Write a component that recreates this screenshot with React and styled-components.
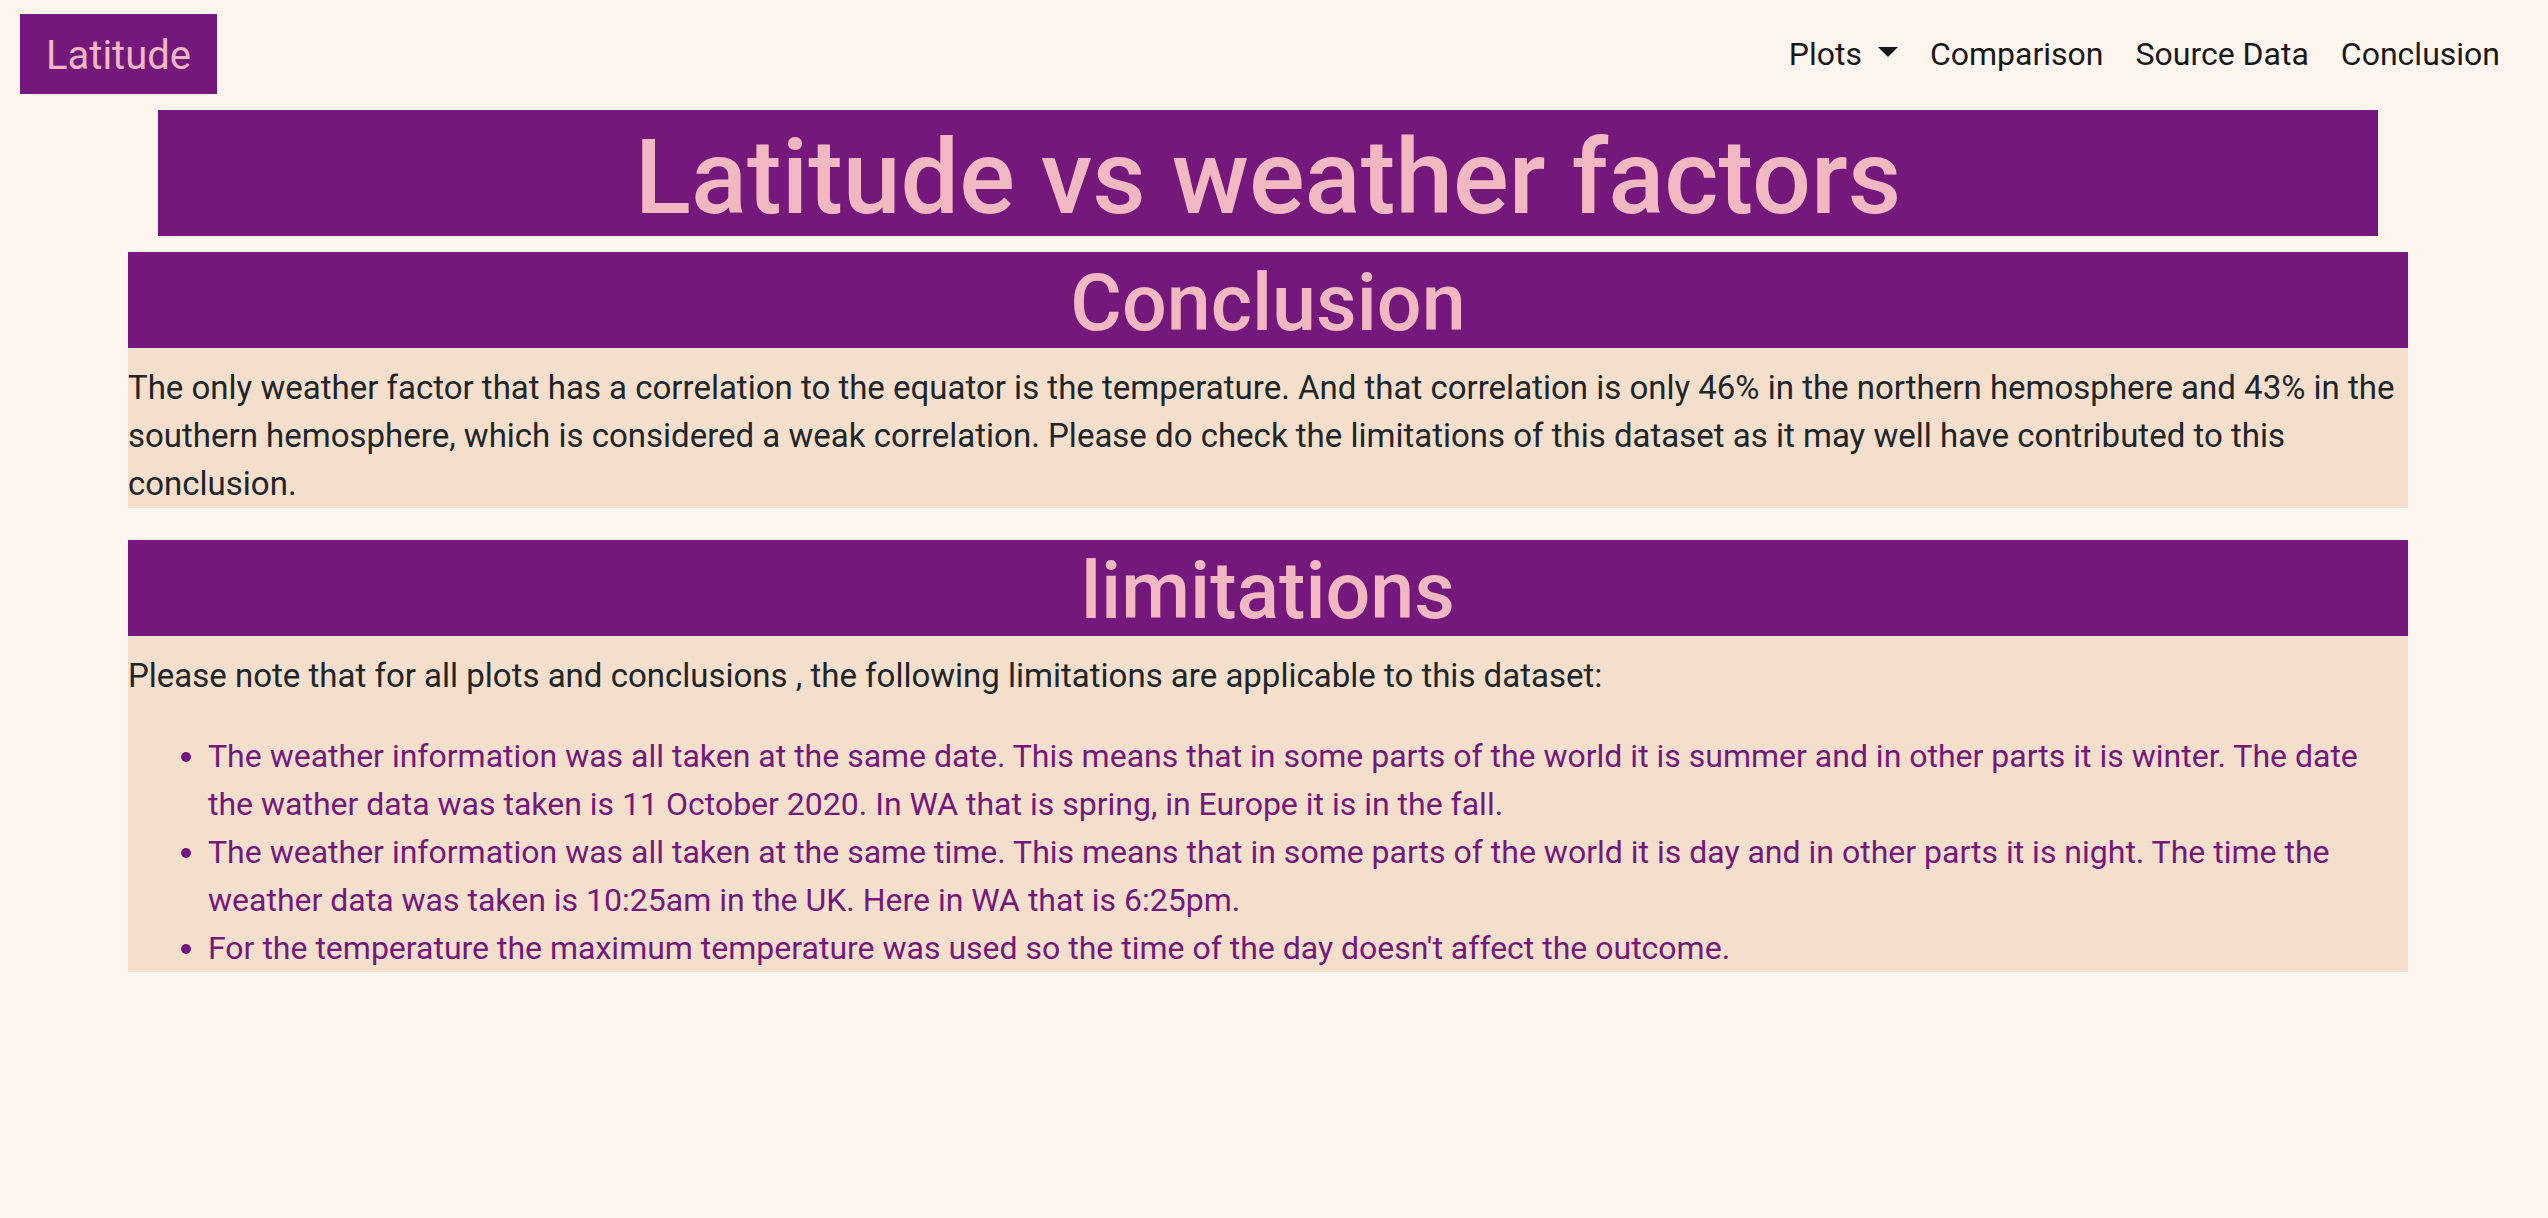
import React from "react";
import styled, { createGlobalStyle } from "styled-components";

const colors = {
  page: "#fef5ef",
  purple: "#74187b",
  pink: "#f2b8c2",
  panel: "#f4dfcc",
  text: "#212529",
  nav: "#191818",
};

const GlobalStyle = createGlobalStyle`
  *, *::before, *::after { box-sizing: border-box; }
  body {
    margin: 0;
    min-height: 100vh;
    background: ${colors.page};
    color: ${colors.text};
    font-family: Roboto, Inter, "Liberation Sans", sans-serif;
    font-size: 32px;
    line-height: 48px;
  }
`;

const Page = styled.div`
  padding-right: 12px;
`;

const Navbar = styled.nav`
  display: flex;
  align-items: center;
  justify-content: space-between;
  padding: 14px 20px 16px;
`;

const Brand = styled.a`
  padding: 12px 26px 8px;
  background: ${colors.purple};
  color: ${colors.pink};
  font-size: 40px;
  line-height: 60px;
  text-decoration: none;
`;

const NavList = styled.ul`
  display: flex;
  margin: 0;
  padding: 0;
  list-style: none;
`;

const NavLink = styled.a`
  display: block;
  padding: 16px;
  color: ${colors.nav};
  text-decoration: none;
`;

const NavToggle = styled.button`
  display: flex;
  align-items: center;
  gap: 16px;
  padding: 16px;
  border: 0;
  background: none;
  color: ${colors.nav};
  font: inherit;
  cursor: pointer;

  &::after {
    content: "";
    margin-bottom: 4px;
    border-top: 10px solid;
    border-right: 10px solid transparent;
    border-left: 10px solid transparent;
  }
`;

const Container = styled.main`
  max-width: 2280px;
  margin: 0 auto;
`;

const Title = styled.h1`
  margin: 0 30px 16px;
  padding-top: 10px;
  background: ${colors.purple};
  color: ${colors.pink};
  font-size: 104px;
  font-weight: 500;
  line-height: 116px;
  text-align: center;
`;

const Section = styled.section`
  margin-bottom: 32px;
  background: ${colors.panel};
`;

const Heading = styled.h2`
  margin: 0 0 16px;
  padding-top: 6px;
  background: ${colors.purple};
  color: ${colors.pink};
  font-size: 79px;
  font-weight: 500;
  line-height: 90px;
  text-align: center;
`;

const Text = styled.p`
  margin: 0;
  font-size: 33px;
`;

const List = styled.ul`
  margin: 32px 0 0;
  padding: 0 0 0 80px;
  color: ${colors.purple};
`;

const links = ["Comparison", "Source Data", "Conclusion"];

const limitations = [
  "The weather information was all taken at the same date. This means that in some parts of the world it is summer and in other parts it is winter. The date the wather data was taken is 11 October 2020. In WA that is spring, in Europe it is in the fall.",
  "The weather information was all taken at the same time. This means that in some parts of the world it is day and in other parts it is night. The time the weather data was taken is 10:25am in the UK. Here in WA that is 6:25pm.",
  "For the temperature the maximum temperature was used so the time of the day doesn't affect the outcome.",
];

export default function App() {
  return (
    <Page>
      <GlobalStyle />
      <Navbar>
        <Brand href="#home">Latitude</Brand>
        <NavList>
          <li>
            <NavToggle type="button" aria-haspopup="true">Plots</NavToggle>
          </li>
          {links.map((label) => (
            <li key={label}>
              <NavLink href="#">{label}</NavLink>
            </li>
          ))}
        </NavList>
      </Navbar>
      <Container>
        <Title>Latitude vs weather factors</Title>
        <Section>
          <Heading>Conclusion</Heading>
          <Text>
            The only weather factor that has a correlation to the equator is the
            temperature. And that correlation is only 46% in the northern
            hemosphere and 43% in the southern hemosphere, which is considered a
            weak correlation. Please do check the limitations of this dataset as
            it may well have contributed to this conclusion.
          </Text>
        </Section>
        <Section>
          <Heading>limitations</Heading>
          <Text>
            Please note that for all plots and conclusions , the following
            limitations are applicable to this dataset:
          </Text>
          <List>
            {limitations.map((item) => (
              <li key={item}>{item}</li>
            ))}
          </List>
        </Section>
      </Container>
    </Page>
  );
}
